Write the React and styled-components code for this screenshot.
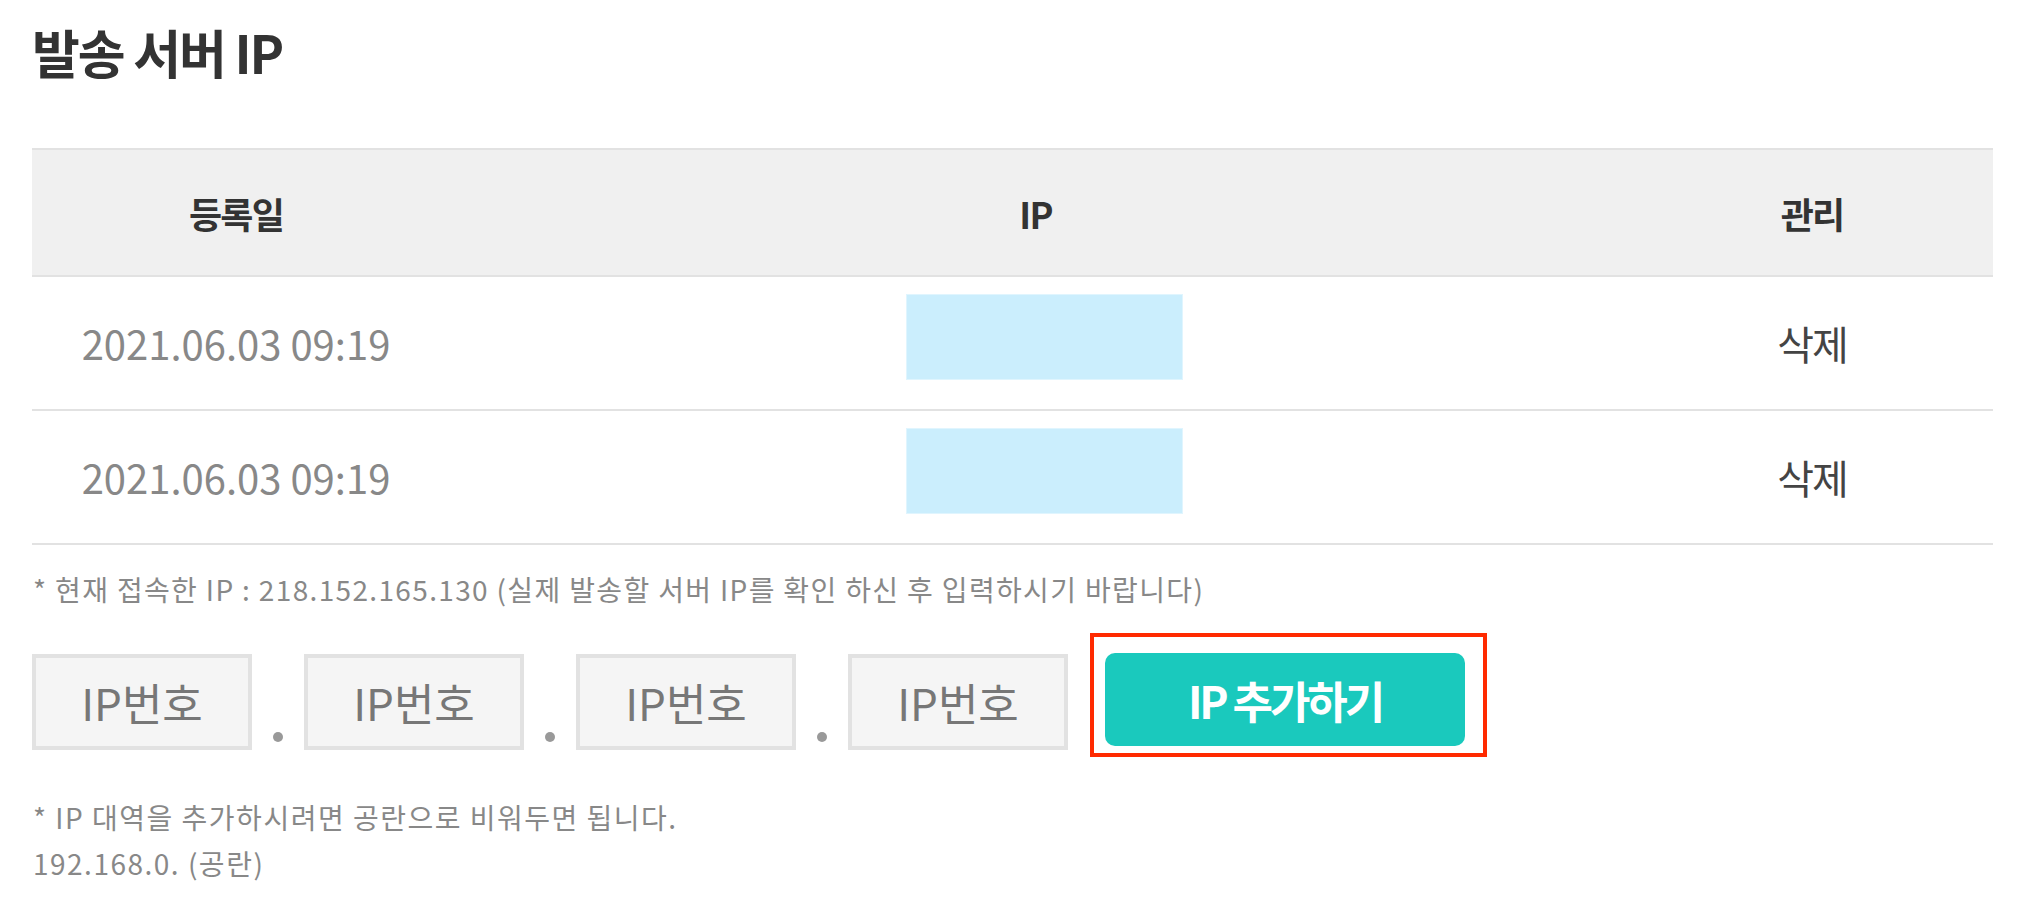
import React from "react";
import styled, { createGlobalStyle } from "styled-components";

const Global = createGlobalStyle`
  html, body { margin: 0; padding: 0; background: #ffffff; }
  body { font-family: "Noto Sans CJK KR", "Noto Sans", sans-serif; }
  * { box-sizing: border-box; }
`;

const Page = styled.div`
  padding: 14px 0 40px 32px;
  width: 1993px;
`;

const Title = styled.h2`
  margin: 0;
  font-size: 52px;
  line-height: 76px;
  font-weight: 700;
  color: #333333;
  letter-spacing: -0.04em;
`;

const Table = styled.div`
  margin-top: 58px;
  width: 1961px;
  display: grid;
  grid-template-columns: 408px 1fr 362px;
`;

const HeadCell = styled.div`
  height: 129px;
  background: #f0f0f0;
  border-top: 2px solid #e2e2e2;
  border-bottom: 2px solid #e2e2e2;
  display: flex;
  align-items: center;
  justify-content: center;
  font-size: 36px;
  font-weight: 700;
  color: #333333;
  letter-spacing: -0.05em;
`;

const Cell = styled.div`
  height: 134px;
  border-bottom: 2px solid #e2e2e2;
  display: flex;
  align-items: ${(p) => (p.$top ? "flex-start" : "center")};
  justify-content: center;
  font-size: 40px;
  color: ${(p) => p.$color || "#888888"};
  letter-spacing: ${(p) => p.$spacing || "0"};
`;

const Redacted = styled.div`
  width: 277px;
  height: 86px;
  margin-top: 17px;
  margin-left: 18px;
  background: #cbeefd;
  border: 1px solid #e0f5fe;
`;

const Notice = styled.p`
  margin: 24px 0 0 1px;
  font-size: 28px;
  line-height: 40px;
  color: #888888;
  letter-spacing: 1.35px;
`;

const InputRow = styled.div`
  margin-top: 45px;
  display: flex;
  align-items: flex-start;
`;

const IpInput = styled.input`
  width: 220px;
  height: 96px;
  border: 4px solid #e2e2e2;
  background: #f5f5f5;
  text-align: center;
  font-family: "Noto Sans CJK KR", "Noto Sans", sans-serif;
  font-size: 44px;
  color: #777777;
  letter-spacing: 0;
  padding: 0;
  outline: none;
  &::placeholder { color: #777777; opacity: 1; }
`;

const Sep = styled.div`
  width: 52px;
  height: 96px;
  display: flex;
  justify-content: center;
  align-items: flex-end;
  padding-bottom: 8px;
`;

const Dot = styled.span`
  width: 10px;
  height: 10px;
  border-radius: 50%;
  background: #999999;
`;

const AddButton = styled.button`
  position: relative;
  margin-left: 37px;
  margin-top: -1px;
  width: 360px;
  height: 93px;
  border: none;
  border-radius: 10px;
  background: #1ac9bd;
  color: #ffffff;
  font-family: "Noto Sans CJK KR", "Noto Sans", sans-serif;
  font-size: 44px;
  font-weight: 700;
  letter-spacing: -0.07em;
  padding: 0;
  cursor: pointer;
  &::after {
    content: "";
    position: absolute;
    top: -20px;
    left: -15px;
    right: -22px;
    bottom: -11px;
    border: 4px solid #ff2a00;
    pointer-events: none;
  }
`;

const Help = styled.div`
  margin-top: 44px;
  margin-left: 1px;
  font-size: 28px;
  line-height: 46px;
  color: #888888;
  letter-spacing: 1.5px;
`;

const rows = [
  { date: "2021.06.03 09:19" },
  { date: "2021.06.03 09:19" },
];

export default function App() {
  return (
    <>
      <Global />
      <Page>
        <Title>발송 서버 IP</Title>
        <Table>
          <HeadCell>등록일</HeadCell>
          <HeadCell>IP</HeadCell>
          <HeadCell>관리</HeadCell>
          {rows.map((r, i) => (
            <React.Fragment key={i}>
              <Cell>{r.date}</Cell>
              <Cell $top>
                <Redacted />
              </Cell>
              <Cell $color="#444444" $spacing="-0.05em">삭제</Cell>
            </React.Fragment>
          ))}
        </Table>
        <Notice>
          * 현재 접속한 IP : 218.152.165.130 (실제 발송할 서버 IP를 확인 하신 후 입력하시기 바랍니다)
        </Notice>
        <InputRow>
          <IpInput placeholder="IP번호" />
          <Sep><Dot /></Sep>
          <IpInput placeholder="IP번호" />
          <Sep><Dot /></Sep>
          <IpInput placeholder="IP번호" />
          <Sep><Dot /></Sep>
          <IpInput placeholder="IP번호" />
          <AddButton>IP 추가하기</AddButton>
        </InputRow>
        <Help>
          * IP 대역을 추가하시려면 공란으로 비워두면 됩니다.
          <br />
          192.168.0. (공란)
        </Help>
      </Page>
    </>
  );
}
